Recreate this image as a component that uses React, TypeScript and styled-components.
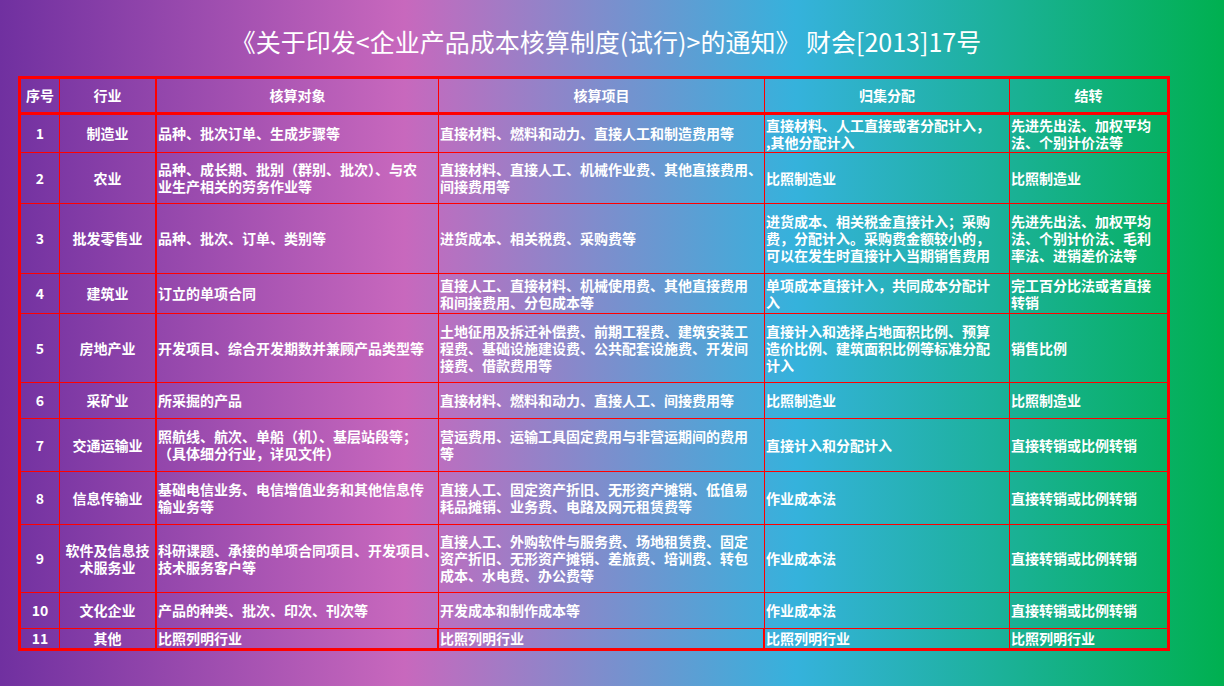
import React from 'react';
import styled, { createGlobalStyle } from 'styled-components';

const GlobalStyle = createGlobalStyle`
  html, body {
    margin: 0;
    padding: 0;
  }
  body {
    font-family: "Noto Sans CJK SC", "Noto Sans", sans-serif;
  }
`;

const Page = styled.div`
  min-height: 100vh;
  background: linear-gradient(90deg, #7030a0 0%, #c868bd 33%, #35b2dc 65%, #00b050 100%);
  color: #ffffff;
`;

const Title = styled.h1`
  margin: 0;
  height: 76px;
  box-sizing: border-box;
  padding: 23px 12px 0 0;
  font-size: 25px;
  line-height: 36px;
  font-weight: 400;
  text-align: center;
  white-space: pre;
`;

const Sheet = styled.table`
  margin-left: 18px;
  width: 1152px;
  box-sizing: border-box;
  table-layout: fixed;
  border-collapse: separate;
  border-spacing: 0;
  border: 3px solid #ff0000;
`;

const Col = styled.col<{ $w: number }>`
  width: ${p => p.$w}px;
`;

const Row = styled.tr<{ $h: number }>`
  height: ${p => p.$h}px;
`;

const HeadCell = styled.th<{ $thick?: boolean; $end?: boolean }>`
  padding: 0;
  border-right: ${p => (p.$end ? 0 : p.$thick ? 2 : 1)}px solid #ff0000;
  border-bottom: 3px solid #ff0000;
  font-size: 14px;
  line-height: 17px;
  font-weight: 700;
  text-align: center;
  vertical-align: middle;
`;

const Cell = styled.td<{ $center?: boolean; $thick?: boolean; $end?: boolean; $bottom?: boolean }>`
  padding: 0 0 0 ${p => (p.$center ? 0 : 1)}px;
  border-right: ${p => (p.$end ? 0 : p.$thick ? 2 : 1)}px solid #ff0000;
  border-bottom: ${p => (p.$bottom ? 0 : 1)}px solid #ff0000;
  font-size: 14px;
  line-height: 17px;
  font-weight: 700;
  text-align: ${p => (p.$center ? 'center' : 'left')};
  vertical-align: middle;
  white-space: pre;
  overflow: visible;
`;

const widths = [39, 97, 282, 326, 245, 157];
const heads = ['序号', '行业', '核算对象', '核算项目', '归集分配', '结转'];

type Item = { no: string; ind: string; h: number; cols: string[] };

const rows: Item[] = [
  {
    no: '1', ind: '制造业', h: 38,
    cols: [
      '品种、批次订单、生成步骤等',
      '直接材料、燃料和动力、直接人工和制造费用等',
      '直接材料、人工直接或者分配计入，\n,其他分配计入',
      '先进先出法、加权平均\n法、个别计价法等',
    ],
  },
  {
    no: '2', ind: '农业', h: 51,
    cols: [
      '品种、成长期、批别（群别、批次）、与农\n业生产相关的劳务作业等',
      '直接材料、直接人工、机械作业费、其他直接费用、\n间接费用等',
      '比照制造业',
      '比照制造业',
    ],
  },
  {
    no: '3', ind: '批发零售业', h: 70,
    cols: [
      '品种、批次、订单、类别等',
      '进货成本、相关税费、采购费等',
      '进货成本、相关税金直接计入；采购\n费，分配计入。采购费金额较小的，\n可以在发生时直接计入当期销售费用',
      '先进先出法、加权平均\n法、个别计价法、毛利\n率法、进销差价法等',
    ],
  },
  {
    no: '4', ind: '建筑业', h: 40,
    cols: [
      '订立的单项合同',
      '直接人工、直接材料、机械使用费、其他直接费用\n和间接费用、分包成本等',
      '单项成本直接计入，共同成本分配计\n入',
      '完工百分比法或者直接\n转销',
    ],
  },
  {
    no: '5', ind: '房地产业', h: 69,
    cols: [
      '开发项目、综合开发期数并兼顾产品类型等',
      '土地征用及拆迁补偿费、前期工程费、建筑安装工\n程费、基础设施建设费、公共配套设施费、开发间\n接费、借款费用等',
      '直接计入和选择占地面积比例、预算\n造价比例、建筑面积比例等标准分配\n计入',
      '销售比例',
    ],
  },
  {
    no: '6', ind: '采矿业', h: 36,
    cols: [
      '所采掘的产品',
      '直接材料、燃料和动力、直接人工、间接费用等',
      '比照制造业',
      '比照制造业',
    ],
  },
  {
    no: '7', ind: '交通运输业', h: 53,
    cols: [
      '照航线、航次、单船（机）、基层站段等；\n（具体细分行业，详见文件）',
      '营运费用、运输工具固定费用与非营运期间的费用\n等',
      '直接计入和分配计入',
      '直接转销或比例转销',
    ],
  },
  {
    no: '8', ind: '信息传输业', h: 53,
    cols: [
      '基础电信业务、电信增值业务和其他信息传\n输业务等',
      '直接人工、固定资产折旧、无形资产摊销、低值易\n耗品摊销、业务费、电路及网元租赁费等',
      '作业成本法',
      '直接转销或比例转销',
    ],
  },
  {
    no: '9', ind: '软件及信息技\n术服务业', h: 68,
    cols: [
      '科研课题、承接的单项合同项目、开发项目、\n技术服务客户等',
      '直接人工、外购软件与服务费、场地租赁费、固定\n资产折旧、无形资产摊销、差旅费、培训费、转包\n成本、水电费、办公费等',
      '作业成本法',
      '直接转销或比例转销',
    ],
  },
  {
    no: '10', ind: '文化企业', h: 36,
    cols: [
      '产品的种类、批次、印次、刊次等',
      '开发成本和制作成本等',
      '作业成本法',
      '直接转销或比例转销',
    ],
  },
  {
    no: '11', ind: '其他', h: 19,
    cols: ['比照列明行业', '比照列明行业', '比照列明行业', '比照列明行业'],
  },
];

const App: React.FC = () => {
  return (
    <Page>
      <GlobalStyle />
      <Title>{'《关于印发<企业产品成本核算制度(试行)>的通知》 财会[2013]17号'}</Title>
      <Sheet>
        <colgroup>
          {widths.map((w, i) => (
            <Col key={i} $w={w} />
          ))}
        </colgroup>
        <thead>
          <Row $h={36}>
            {heads.map((h, i) => (
              <HeadCell key={h} $thick={i === 1} $end={i === heads.length - 1}>
                {h}
              </HeadCell>
            ))}
          </Row>
        </thead>
        <tbody>
          {rows.map((r, ri) => {
            const last = ri === rows.length - 1;
            return (
              <Row key={r.no} $h={r.h}>
                <Cell $center $bottom={last}>{r.no}</Cell>
                <Cell $center $thick $bottom={last}>{r.ind}</Cell>
                {r.cols.map((c, ci) => (
                  <Cell
                    key={ci}
                    $bottom={last}
                    $thick={last && (ci === 0 || ci === 1)}
                    $end={ci === r.cols.length - 1}
                  >
                    {c}
                  </Cell>
                ))}
              </Row>
            );
          })}
        </tbody>
      </Sheet>
    </Page>
  );
};

export default App;
